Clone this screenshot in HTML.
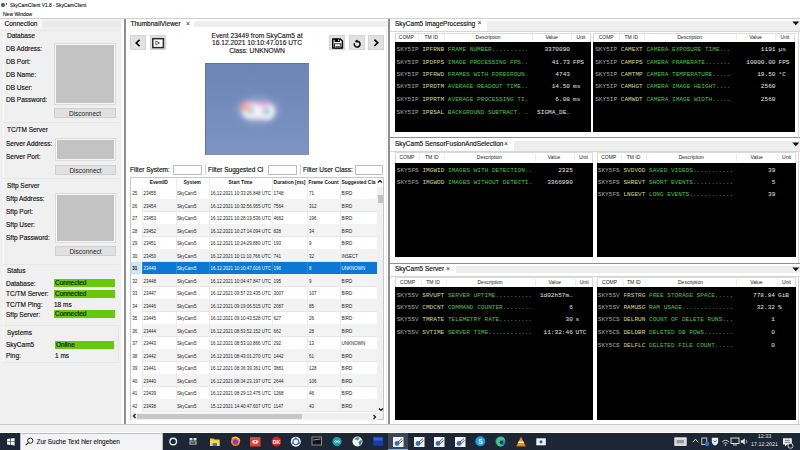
<!DOCTYPE html><html><head><meta charset="utf-8"><style>
*{margin:0;padding:0;box-sizing:border-box}
html,body{width:800px;height:450px;overflow:hidden;background:#fff;font-family:"Liberation Sans",sans-serif;color:#1e1e1e}
.a{position:absolute;white-space:nowrap}
.ui{font-size:6.5px;line-height:8px;color:#111;-webkit-text-stroke:0.15px #111}
.tb{background:#c4c4c4;border:1px solid #e2e2e2}
.btn{background:#e1e1e1;border:1px solid #cfcfcf;text-align:center;font-size:6.5px;line-height:8px}
.grn{background:#66c90c;font-size:6.5px;line-height:8px;padding-left:1px;color:#0b1f00;-webkit-text-stroke:0.2px #0b1f00}
.mono{font-family:"Liberation Mono",monospace;font-size:6.1px;line-height:7px;font-weight:normal}
.blk{background:#000}
.hdr{background:#fff;border:1px solid #d8d8d8;font-size:5px;line-height:8px;color:#222}
.tr{font-size:4.5px;line-height:12px;color:#111}
.th{font-size:4.9px;line-height:10px;font-weight:bold;color:#111}
</style></head><body>
<div class="a" style="left:1.3px;top:3.3px;width:3.8px;height:3.8px;background:#3a5f95;border-radius:2px;box-shadow:0 0 1px #9ec0ea"></div>
<div class="a" style="left:5.6px;top:2.8px;width:1.4px;height:2px;background:#6a4c70;"></div>
<div class="a " style="left:10px;top:1.5px;font-size:4.8px;line-height:8px;color:#111;-webkit-text-stroke:0.1px #111">SkyCamClient V1.8 - SkyCamClient</div>
<div class="a " style="left:3px;top:10.7px;font-size:5px;line-height:7px;color:#111;-webkit-text-stroke:0.1px #111">New Window</div>
<div class="a" style="left:0px;top:18px;width:800px;height:1px;background:#cfcfcf;"></div>
<div class="a" style="left:0px;top:19px;width:123px;height:406px;background:#f0f0f0;"></div>
<div class="a" style="left:0px;top:19px;width:42px;height:10px;background:#f8f8f8;"></div>
<div class="a" style="left:42px;top:20.5px;width:80px;height:6px;background:#eaeaea;"></div>
<div class="a ui" style="left:4.5px;top:19.5px;">Connection</div>
<div class="a" style="left:3px;top:30px;width:116px;height:1px;background:#e6e6e6;"></div>
<div class="a" style="left:3px;top:31px;width:1px;height:91px;background:#f8f8f8;"></div>
<div class="a ui" style="left:7px;top:31.5px;">Database</div>
<div class="a ui" style="left:6px;top:45px;">DB Address:</div>
<div class="a ui" style="left:6px;top:57.5px;">DB Port:</div>
<div class="a ui" style="left:6px;top:71px;">DB Name:</div>
<div class="a ui" style="left:6px;top:83.5px;">DB User:</div>
<div class="a ui" style="left:6px;top:96px;">DB Password:</div>
<div class="a" style="left:53.5px;top:42.5px;width:62px;height:62px;background:#c3c3c3;border:1px solid #dcdcdc;box-shadow:inset 0 0 0 1px #f6f6f6"></div>
<div class="a" style="left:54.5px;top:55.5px;width:1.2px;height:2px;background:#f6f6f6;"></div>
<div class="a" style="left:113.8px;top:55.5px;width:1.2px;height:2px;background:#f6f6f6;"></div>
<div class="a" style="left:54.5px;top:68.5px;width:1.2px;height:2px;background:#f6f6f6;"></div>
<div class="a" style="left:113.8px;top:68.5px;width:1.2px;height:2px;background:#f6f6f6;"></div>
<div class="a" style="left:54.5px;top:81px;width:1.2px;height:2px;background:#f6f6f6;"></div>
<div class="a" style="left:113.8px;top:81px;width:1.2px;height:2px;background:#f6f6f6;"></div>
<div class="a" style="left:54.5px;top:93.5px;width:1.2px;height:2px;background:#f6f6f6;"></div>
<div class="a" style="left:113.8px;top:93.5px;width:1.2px;height:2px;background:#f6f6f6;"></div>
<div class="a btn" style="left:54px;top:108px;width:62px;height:10px;line-height:9px">Disconnect</div>
<div class="a" style="left:3px;top:122px;width:116px;height:1px;background:#e6e6e6;"></div>
<div class="a" style="left:3px;top:123px;width:1px;height:55px;background:#f8f8f8;"></div>
<div class="a ui" style="left:7px;top:126px;">TC/TM Server</div>
<div class="a ui" style="left:6px;top:139.5px;">Server Address:</div>
<div class="a ui" style="left:6px;top:152.5px;">Server Port:</div>
<div class="a" style="left:54.5px;top:137.5px;width:61.5px;height:23.5px;background:#c3c3c3;border:1px solid #dcdcdc;box-shadow:inset 0 0 0 1px #f6f6f6"></div>
<div class="a" style="left:55.5px;top:149px;width:1.2px;height:2px;background:#f6f6f6;"></div>
<div class="a" style="left:114.3px;top:149px;width:1.2px;height:2px;background:#f6f6f6;"></div>
<div class="a btn" style="left:55px;top:164.5px;width:61px;height:10px;line-height:9px">Disconnect</div>
<div class="a" style="left:3px;top:178px;width:116px;height:1px;background:#e6e6e6;"></div>
<div class="a" style="left:3px;top:179px;width:1px;height:85px;background:#f8f8f8;"></div>
<div class="a ui" style="left:7px;top:182px;">Sftp Server</div>
<div class="a ui" style="left:6px;top:195px;">Sftp Address:</div>
<div class="a ui" style="left:6px;top:208px;">Sftp Port:</div>
<div class="a ui" style="left:6px;top:221px;">Sftp User:</div>
<div class="a ui" style="left:6px;top:234px;">Sftp Password:</div>
<div class="a" style="left:54.5px;top:192.5px;width:61px;height:50.5px;background:#c3c3c3;border:1px solid #dcdcdc;box-shadow:inset 0 0 0 1px #f6f6f6"></div>
<div class="a" style="left:55.5px;top:204.5px;width:1.2px;height:2px;background:#f6f6f6;"></div>
<div class="a" style="left:113.8px;top:204.5px;width:1.2px;height:2px;background:#f6f6f6;"></div>
<div class="a" style="left:55.5px;top:217px;width:1.2px;height:2px;background:#f6f6f6;"></div>
<div class="a" style="left:113.8px;top:217px;width:1.2px;height:2px;background:#f6f6f6;"></div>
<div class="a" style="left:55.5px;top:229.5px;width:1.2px;height:2px;background:#f6f6f6;"></div>
<div class="a" style="left:113.8px;top:229.5px;width:1.2px;height:2px;background:#f6f6f6;"></div>
<div class="a btn" style="left:55px;top:246px;width:61px;height:10px;line-height:9px">Disconnect</div>
<div class="a" style="left:3px;top:264px;width:116px;height:1px;background:#e6e6e6;"></div>
<div class="a" style="left:3px;top:265px;width:1px;height:60px;background:#f8f8f8;"></div>
<div class="a ui" style="left:7px;top:267px;">Status</div>
<div class="a ui" style="left:6px;top:279.5px;">Database:</div>
<div class="a ui" style="left:6px;top:289.5px;">TC/TM Server:</div>
<div class="a ui" style="left:6px;top:300.5px;">TC/TM Ping:</div>
<div class="a ui" style="left:6px;top:310.8px;">Sftp Server:</div>
<div class="a grn" style="left:54px;top:279.2px;width:61px;height:8px">Connected</div>
<div class="a grn" style="left:54px;top:289.6px;width:61px;height:8px">Connected</div>
<div class="a grn" style="left:54px;top:310.4px;width:61px;height:8px">Connected</div>
<div class="a ui" style="left:54px;top:300.5px;">18 ms</div>
<div class="a" style="left:3px;top:325px;width:116px;height:1px;background:#e6e6e6;"></div>
<div class="a" style="left:3px;top:326px;width:1px;height:37px;background:#f8f8f8;"></div>
<div class="a ui" style="left:7px;top:329px;">Systems</div>
<div class="a" style="left:3px;top:362px;width:116px;height:1px;background:#e6e6e6;"></div>
<div class="a" style="left:118px;top:326px;width:1px;height:36px;background:#e6e6e6;"></div>
<div class="a ui" style="left:6px;top:340.5px;">SkyCam5</div>
<div class="a ui" style="left:6px;top:351.5px;">Ping:</div>
<div class="a grn" style="left:55px;top:340.7px;width:59px;height:8px">Online</div>
<div class="a ui" style="left:55px;top:351.5px;">1 ms</div>
<div class="a" style="left:194px;top:20.5px;width:194px;height:6px;background:#eeeeee;"></div>
<div class="a ui" style="left:130.5px;top:20.2px;">ThumbnailViewer</div>
<div class="a " style="left:186px;top:20.2px;font-size:7px;line-height:8px">&#215;</div>
<div class="a" style="left:130.3px;top:34.8px;width:15.7px;height:15.7px;background:#e1e1e1;border:1px solid #d4d4d4"><svg width="14" height="14" style="position:absolute;left:0;top:0"><path d="M8.6 3.9 L5.2 7 L8.6 10.2" stroke="#000" stroke-width="1.6" fill="none"/></svg></div>
<div class="a" style="left:149.5px;top:34.8px;width:16px;height:15.7px;background:#e1e1e1;border:1px solid #d4d4d4"><svg width="14" height="14" style="position:absolute;left:0;top:0"><rect x="1.8" y="2.7" width="10.6" height="8.9" stroke="#2a2a2a" stroke-width="1.5" fill="#fff"/><path d="M4.9 5 L8.6 7 L4.9 9 Z" fill="none" stroke="#555" stroke-width="0.9"/></svg></div>
<div class="a" style="left:329.4px;top:34.8px;width:15.4px;height:15.7px;background:#e1e1e1;border:1px solid #d4d4d4"><svg width="14" height="14" style="position:absolute;left:0;top:0"><path d="M2.8 2.9 L10.3 2.9 L12.4 5 L12.4 12 L2.8 12 Z" stroke="#000" stroke-width="1.5" fill="#fff"/><rect x="4.6" y="2.9" width="5.4" height="3.1" fill="#000"/><rect x="8.2" y="3.5" width="1" height="1.8" fill="#fff"/><rect x="4.6" y="7.8" width="6.2" height="4.2" fill="#fff" stroke="#000" stroke-width="0.8"/><rect x="5.5" y="10.3" width="4.4" height="1.2" fill="#111"/></svg></div>
<div class="a" style="left:348.9px;top:34.8px;width:15.7px;height:15.7px;background:#e1e1e1;border:1px solid #d4d4d4"><svg width="14" height="14" style="position:absolute;left:0;top:0"><path d="M6.8 5.2 A2.9 2.9 0 1 1 4.4 7.2" stroke="#000" stroke-width="1.5" fill="none"/><path d="M4.6 5.3 L7.4 3.6 L7.4 6.9 Z" fill="#000"/></svg></div>
<div class="a" style="left:368px;top:34.8px;width:15.8px;height:15.7px;background:#e1e1e1;border:1px solid #d4d4d4"><svg width="14" height="14" style="position:absolute;left:0;top:0"><path d="M5.4 3.6 L8.8 6.8 L5.4 10" stroke="#000" stroke-width="1.6" fill="none"/></svg></div>
<div class="a" style="left:196px;top:32px;width:122px;text-align:center;font-size:6.7px;line-height:7.3px;color:#111;-webkit-text-stroke:0.12px #111">Event 23449 from SkyCam5 at<br>16.12.2021 10:10:47.016 UTC<br>Class: UNKNOWN</div>
<div class="a" style="left:205px;top:63px;width:104px;height:92px;background:linear-gradient(180deg,#6d85b5 0%,#738bbb 45%,#7d94c3 100%);overflow:hidden;box-shadow:inset 1px 1px 0 #5d73a4"><svg width="104" height="92" style="position:absolute;left:0;top:0"><defs><filter id="bl" x="-50%" y="-50%" width="200%" height="200%"><feGaussianBlur stdDeviation="1.9"/></filter><filter id="bl2" x="-50%" y="-50%" width="200%" height="200%"><feGaussianBlur stdDeviation="3.5"/></filter></defs><ellipse cx="53" cy="47.5" rx="21" ry="13" fill="#a9b8da" opacity="0.7" filter="url(#bl2)"/><g filter="url(#bl)"><ellipse cx="53.3" cy="48" rx="15" ry="8.5" fill="#e6e8f2"/><circle cx="45.3" cy="47.5" r="6.3" stroke="#f6f4f8" stroke-width="4.2" fill="#b8d4dc"/><circle cx="61.3" cy="48.5" r="6.3" stroke="#f4f4f8" stroke-width="4.2" fill="#b0cfd8"/><ellipse cx="39.5" cy="44" rx="3.5" ry="4.5" fill="#ff9080" opacity="0.8"/><ellipse cx="46" cy="40.8" rx="6" ry="2.2" fill="#f5a0c0" opacity="0.7"/><ellipse cx="58.5" cy="41.5" rx="7" ry="2.6" fill="#ec90d0" opacity="0.65"/></g></svg></div>
<div class="a ui" style="left:130px;top:165.5px;">Filter System:</div>
<div class="a" style="left:173px;top:164.5px;width:29px;height:10px;background:#fff;border:1px solid #bdbdbd"></div>
<div class="a" style="left:204.5px;top:164px;width:1px;height:11px;background:#d8d8d8;"></div>
<div class="a ui" style="left:208px;top:165.5px;">Filter Suggested Cl</div>
<div class="a" style="left:268px;top:164.5px;width:29px;height:10px;background:#fff;border:1px solid #bdbdbd"></div>
<div class="a" style="left:299.5px;top:164px;width:1px;height:11px;background:#d8d8d8;"></div>
<div class="a ui" style="left:303px;top:165.5px;">Filter User Class:</div>
<div class="a" style="left:354.5px;top:164.5px;width:28px;height:10px;background:#fff;border:1px solid #bdbdbd"></div>
<div class="a" style="left:130px;top:177px;width:254px;height:243px;background:#fff;border:1px solid #c8c8c8"></div>
<div class="a th" style="left:142px;top:177.5px;width:33.5px;text-align:center;overflow:hidden;text-overflow:clip">EventID</div>
<div class="a" style="left:175.5px;top:178px;width:1px;height:10px;background:#ececec;"></div>
<div class="a th" style="left:175.5px;top:177.5px;width:33.5px;text-align:center;overflow:hidden;text-overflow:clip">System</div>
<div class="a" style="left:209px;top:178px;width:1px;height:10px;background:#ececec;"></div>
<div class="a th" style="left:209px;top:177.5px;width:63px;text-align:center;overflow:hidden;text-overflow:clip">Start Time</div>
<div class="a" style="left:272px;top:178px;width:1px;height:10px;background:#ececec;"></div>
<div class="a th" style="left:272px;top:177.5px;width:35px;text-align:center;overflow:hidden;text-overflow:clip">Duration [ms]</div>
<div class="a" style="left:307px;top:178px;width:1px;height:10px;background:#ececec;"></div>
<div class="a th" style="left:307px;top:177.5px;width:33px;text-align:center;overflow:hidden;text-overflow:clip">Frame Count</div>
<div class="a" style="left:340px;top:178px;width:1px;height:10px;background:#ececec;"></div>
<div class="a th" style="left:340px;top:177.5px;width:37px;text-align:center;overflow:hidden;text-overflow:clip">Suggested Cla</div>
<div class="a" style="left:377px;top:178px;width:1px;height:10px;background:#ececec;"></div>
<div class="a" style="left:142px;top:186.9px;width:235px;height:12.5px;background:#fff;"></div>
<div class="a tr" style="left:132.3px;top:188.3px;color:#222;">25</div>
<div class="a tr" style="left:143.5px;top:188.3px;color:#222;">23455</div>
<div class="a tr" style="left:177px;top:188.3px;color:#222;">SkyCam5</div>
<div class="a tr" style="left:210.5px;top:188.3px;color:#222;">16.12.2021 10:33:26.848 UTC</div>
<div class="a tr" style="left:273.5px;top:188.3px;color:#222;">1748</div>
<div class="a tr" style="left:309px;top:188.3px;color:#222;">71</div>
<div class="a tr" style="left:341.5px;top:188.3px;color:#222;">BIRD</div>
<div class="a" style="left:142px;top:186.9px;width:1px;height:12.5px;background:#ececec;"></div>
<div class="a" style="left:175.5px;top:186.9px;width:1px;height:12.5px;background:#ececec;"></div>
<div class="a" style="left:209px;top:186.9px;width:1px;height:12.5px;background:#ececec;"></div>
<div class="a" style="left:272px;top:186.9px;width:1px;height:12.5px;background:#ececec;"></div>
<div class="a" style="left:307px;top:186.9px;width:1px;height:12.5px;background:#ececec;"></div>
<div class="a" style="left:340px;top:186.9px;width:1px;height:12.5px;background:#ececec;"></div>
<div class="a" style="left:142px;top:198.9px;width:235px;height:0.6px;background:#e6e6e6;"></div>
<div class="a" style="left:142px;top:199.4px;width:235px;height:12.5px;background:#f3f3f3;"></div>
<div class="a tr" style="left:132.3px;top:200.8px;color:#222;">26</div>
<div class="a tr" style="left:143.5px;top:200.8px;color:#222;">23454</div>
<div class="a tr" style="left:177px;top:200.8px;color:#222;">SkyCam5</div>
<div class="a tr" style="left:210.5px;top:200.8px;color:#222;">16.12.2021 10:32:56.955 UTC</div>
<div class="a tr" style="left:273.5px;top:200.8px;color:#222;">7564</div>
<div class="a tr" style="left:309px;top:200.8px;color:#222;">312</div>
<div class="a tr" style="left:341.5px;top:200.8px;color:#222;">BIRD</div>
<div class="a" style="left:142px;top:199.4px;width:1px;height:12.5px;background:#ececec;"></div>
<div class="a" style="left:175.5px;top:199.4px;width:1px;height:12.5px;background:#ececec;"></div>
<div class="a" style="left:209px;top:199.4px;width:1px;height:12.5px;background:#ececec;"></div>
<div class="a" style="left:272px;top:199.4px;width:1px;height:12.5px;background:#ececec;"></div>
<div class="a" style="left:307px;top:199.4px;width:1px;height:12.5px;background:#ececec;"></div>
<div class="a" style="left:340px;top:199.4px;width:1px;height:12.5px;background:#ececec;"></div>
<div class="a" style="left:142px;top:211.4px;width:235px;height:0.6px;background:#e6e6e6;"></div>
<div class="a" style="left:142px;top:211.9px;width:235px;height:12.5px;background:#fff;"></div>
<div class="a tr" style="left:132.3px;top:213.3px;color:#222;">27</div>
<div class="a tr" style="left:143.5px;top:213.3px;color:#222;">23453</div>
<div class="a tr" style="left:177px;top:213.3px;color:#222;">SkyCam5</div>
<div class="a tr" style="left:210.5px;top:213.3px;color:#222;">16.12.2021 10:28:19.536 UTC</div>
<div class="a tr" style="left:273.5px;top:213.3px;color:#222;">4662</div>
<div class="a tr" style="left:309px;top:213.3px;color:#222;">196</div>
<div class="a tr" style="left:341.5px;top:213.3px;color:#222;">BIRD</div>
<div class="a" style="left:142px;top:211.9px;width:1px;height:12.5px;background:#ececec;"></div>
<div class="a" style="left:175.5px;top:211.9px;width:1px;height:12.5px;background:#ececec;"></div>
<div class="a" style="left:209px;top:211.9px;width:1px;height:12.5px;background:#ececec;"></div>
<div class="a" style="left:272px;top:211.9px;width:1px;height:12.5px;background:#ececec;"></div>
<div class="a" style="left:307px;top:211.9px;width:1px;height:12.5px;background:#ececec;"></div>
<div class="a" style="left:340px;top:211.9px;width:1px;height:12.5px;background:#ececec;"></div>
<div class="a" style="left:142px;top:223.9px;width:235px;height:0.6px;background:#e6e6e6;"></div>
<div class="a" style="left:142px;top:224.4px;width:235px;height:12.5px;background:#f3f3f3;"></div>
<div class="a tr" style="left:132.3px;top:225.8px;color:#222;">28</div>
<div class="a tr" style="left:143.5px;top:225.8px;color:#222;">23452</div>
<div class="a tr" style="left:177px;top:225.8px;color:#222;">SkyCam5</div>
<div class="a tr" style="left:210.5px;top:225.8px;color:#222;">16.12.2021 10:27:14.094 UTC</div>
<div class="a tr" style="left:273.5px;top:225.8px;color:#222;">828</div>
<div class="a tr" style="left:309px;top:225.8px;color:#222;">34</div>
<div class="a tr" style="left:341.5px;top:225.8px;color:#222;">BIRD</div>
<div class="a" style="left:142px;top:224.4px;width:1px;height:12.5px;background:#ececec;"></div>
<div class="a" style="left:175.5px;top:224.4px;width:1px;height:12.5px;background:#ececec;"></div>
<div class="a" style="left:209px;top:224.4px;width:1px;height:12.5px;background:#ececec;"></div>
<div class="a" style="left:272px;top:224.4px;width:1px;height:12.5px;background:#ececec;"></div>
<div class="a" style="left:307px;top:224.4px;width:1px;height:12.5px;background:#ececec;"></div>
<div class="a" style="left:340px;top:224.4px;width:1px;height:12.5px;background:#ececec;"></div>
<div class="a" style="left:142px;top:236.4px;width:235px;height:0.6px;background:#e6e6e6;"></div>
<div class="a" style="left:142px;top:236.9px;width:235px;height:12.5px;background:#fff;"></div>
<div class="a tr" style="left:132.3px;top:238.3px;color:#222;">29</div>
<div class="a tr" style="left:143.5px;top:238.3px;color:#222;">23451</div>
<div class="a tr" style="left:177px;top:238.3px;color:#222;">SkyCam5</div>
<div class="a tr" style="left:210.5px;top:238.3px;color:#222;">16.12.2021 10:24:29.880 UTC</div>
<div class="a tr" style="left:273.5px;top:238.3px;color:#222;">193</div>
<div class="a tr" style="left:309px;top:238.3px;color:#222;">9</div>
<div class="a tr" style="left:341.5px;top:238.3px;color:#222;">BIRD</div>
<div class="a" style="left:142px;top:236.9px;width:1px;height:12.5px;background:#ececec;"></div>
<div class="a" style="left:175.5px;top:236.9px;width:1px;height:12.5px;background:#ececec;"></div>
<div class="a" style="left:209px;top:236.9px;width:1px;height:12.5px;background:#ececec;"></div>
<div class="a" style="left:272px;top:236.9px;width:1px;height:12.5px;background:#ececec;"></div>
<div class="a" style="left:307px;top:236.9px;width:1px;height:12.5px;background:#ececec;"></div>
<div class="a" style="left:340px;top:236.9px;width:1px;height:12.5px;background:#ececec;"></div>
<div class="a" style="left:142px;top:248.9px;width:235px;height:0.6px;background:#e6e6e6;"></div>
<div class="a" style="left:142px;top:249.4px;width:235px;height:12.5px;background:#f3f3f3;"></div>
<div class="a tr" style="left:132.3px;top:250.8px;color:#222;">30</div>
<div class="a tr" style="left:143.5px;top:250.8px;color:#222;">23450</div>
<div class="a tr" style="left:177px;top:250.8px;color:#222;">SkyCam5</div>
<div class="a tr" style="left:210.5px;top:250.8px;color:#222;">16.12.2021 10:11:10.766 UTC</div>
<div class="a tr" style="left:273.5px;top:250.8px;color:#222;">741</div>
<div class="a tr" style="left:309px;top:250.8px;color:#222;">32</div>
<div class="a tr" style="left:341.5px;top:250.8px;color:#222;">INSECT</div>
<div class="a" style="left:142px;top:249.4px;width:1px;height:12.5px;background:#ececec;"></div>
<div class="a" style="left:175.5px;top:249.4px;width:1px;height:12.5px;background:#ececec;"></div>
<div class="a" style="left:209px;top:249.4px;width:1px;height:12.5px;background:#ececec;"></div>
<div class="a" style="left:272px;top:249.4px;width:1px;height:12.5px;background:#ececec;"></div>
<div class="a" style="left:307px;top:249.4px;width:1px;height:12.5px;background:#ececec;"></div>
<div class="a" style="left:340px;top:249.4px;width:1px;height:12.5px;background:#ececec;"></div>
<div class="a" style="left:142px;top:261.4px;width:235px;height:0.6px;background:#e6e6e6;"></div>
<div class="a" style="left:142px;top:261.9px;width:235px;height:12.5px;background:#fff;"></div>
<div class="a" style="left:142.5px;top:262.4px;width:234.5px;height:11.6px;background:#0a78d4;"></div>
<div class="a" style="left:131px;top:262.4px;width:9.5px;height:11.6px;background:#cde6f7;"></div>
<div class="a tr" style="left:132.3px;top:263.29999999999995px;color:#000;font-weight:bold;">31</div>
<div class="a tr" style="left:143.5px;top:263.29999999999995px;color:#fff;">23449</div>
<div class="a tr" style="left:177px;top:263.29999999999995px;color:#fff;">SkyCam5</div>
<div class="a tr" style="left:210.5px;top:263.29999999999995px;color:#fff;">16.12.2021 10:10:47.016 UTC</div>
<div class="a tr" style="left:273.5px;top:263.29999999999995px;color:#fff;">196</div>
<div class="a tr" style="left:309px;top:263.29999999999995px;color:#fff;">8</div>
<div class="a tr" style="left:341.5px;top:263.29999999999995px;color:#fff;">UNKNOWN</div>
<div class="a" style="left:142px;top:262.4px;width:1px;height:11.6px;background:#2a88d8;"></div>
<div class="a" style="left:175.5px;top:262.4px;width:1px;height:11.6px;background:#2a88d8;"></div>
<div class="a" style="left:209px;top:262.4px;width:1px;height:11.6px;background:#2a88d8;"></div>
<div class="a" style="left:272px;top:262.4px;width:1px;height:11.6px;background:#2a88d8;"></div>
<div class="a" style="left:307px;top:262.4px;width:1px;height:11.6px;background:#2a88d8;"></div>
<div class="a" style="left:340px;top:262.4px;width:1px;height:11.6px;background:#2a88d8;"></div>
<div class="a" style="left:142px;top:274.4px;width:235px;height:12.5px;background:#f3f3f3;"></div>
<div class="a tr" style="left:132.3px;top:275.79999999999995px;color:#222;">32</div>
<div class="a tr" style="left:143.5px;top:275.79999999999995px;color:#222;">23448</div>
<div class="a tr" style="left:177px;top:275.79999999999995px;color:#222;">SkyCam5</div>
<div class="a tr" style="left:210.5px;top:275.79999999999995px;color:#222;">16.12.2021 10:04:47.847 UTC</div>
<div class="a tr" style="left:273.5px;top:275.79999999999995px;color:#222;">195</div>
<div class="a tr" style="left:309px;top:275.79999999999995px;color:#222;">9</div>
<div class="a tr" style="left:341.5px;top:275.79999999999995px;color:#222;">BIRD</div>
<div class="a" style="left:142px;top:274.4px;width:1px;height:12.5px;background:#ececec;"></div>
<div class="a" style="left:175.5px;top:274.4px;width:1px;height:12.5px;background:#ececec;"></div>
<div class="a" style="left:209px;top:274.4px;width:1px;height:12.5px;background:#ececec;"></div>
<div class="a" style="left:272px;top:274.4px;width:1px;height:12.5px;background:#ececec;"></div>
<div class="a" style="left:307px;top:274.4px;width:1px;height:12.5px;background:#ececec;"></div>
<div class="a" style="left:340px;top:274.4px;width:1px;height:12.5px;background:#ececec;"></div>
<div class="a" style="left:142px;top:286.4px;width:235px;height:0.6px;background:#e6e6e6;"></div>
<div class="a" style="left:142px;top:286.9px;width:235px;height:12.5px;background:#fff;"></div>
<div class="a tr" style="left:132.3px;top:288.29999999999995px;color:#222;">33</div>
<div class="a tr" style="left:143.5px;top:288.29999999999995px;color:#222;">23447</div>
<div class="a tr" style="left:177px;top:288.29999999999995px;color:#222;">SkyCam5</div>
<div class="a tr" style="left:210.5px;top:288.29999999999995px;color:#222;">16.12.2021 09:57:23.435 UTC</div>
<div class="a tr" style="left:273.5px;top:288.29999999999995px;color:#222;">3007</div>
<div class="a tr" style="left:309px;top:288.29999999999995px;color:#222;">107</div>
<div class="a tr" style="left:341.5px;top:288.29999999999995px;color:#222;">BIRD</div>
<div class="a" style="left:142px;top:286.9px;width:1px;height:12.5px;background:#ececec;"></div>
<div class="a" style="left:175.5px;top:286.9px;width:1px;height:12.5px;background:#ececec;"></div>
<div class="a" style="left:209px;top:286.9px;width:1px;height:12.5px;background:#ececec;"></div>
<div class="a" style="left:272px;top:286.9px;width:1px;height:12.5px;background:#ececec;"></div>
<div class="a" style="left:307px;top:286.9px;width:1px;height:12.5px;background:#ececec;"></div>
<div class="a" style="left:340px;top:286.9px;width:1px;height:12.5px;background:#ececec;"></div>
<div class="a" style="left:142px;top:298.9px;width:235px;height:0.6px;background:#e6e6e6;"></div>
<div class="a" style="left:142px;top:299.4px;width:235px;height:12.5px;background:#f3f3f3;"></div>
<div class="a tr" style="left:132.3px;top:300.79999999999995px;color:#222;">34</div>
<div class="a tr" style="left:143.5px;top:300.79999999999995px;color:#222;">23446</div>
<div class="a tr" style="left:177px;top:300.79999999999995px;color:#222;">SkyCam5</div>
<div class="a tr" style="left:210.5px;top:300.79999999999995px;color:#222;">16.12.2021 09:19:06.515 UTC</div>
<div class="a tr" style="left:273.5px;top:300.79999999999995px;color:#222;">2087</div>
<div class="a tr" style="left:309px;top:300.79999999999995px;color:#222;">85</div>
<div class="a tr" style="left:341.5px;top:300.79999999999995px;color:#222;">BIRD</div>
<div class="a" style="left:142px;top:299.4px;width:1px;height:12.5px;background:#ececec;"></div>
<div class="a" style="left:175.5px;top:299.4px;width:1px;height:12.5px;background:#ececec;"></div>
<div class="a" style="left:209px;top:299.4px;width:1px;height:12.5px;background:#ececec;"></div>
<div class="a" style="left:272px;top:299.4px;width:1px;height:12.5px;background:#ececec;"></div>
<div class="a" style="left:307px;top:299.4px;width:1px;height:12.5px;background:#ececec;"></div>
<div class="a" style="left:340px;top:299.4px;width:1px;height:12.5px;background:#ececec;"></div>
<div class="a" style="left:142px;top:311.4px;width:235px;height:0.6px;background:#e6e6e6;"></div>
<div class="a" style="left:142px;top:311.9px;width:235px;height:12.5px;background:#fff;"></div>
<div class="a tr" style="left:132.3px;top:313.29999999999995px;color:#222;">35</div>
<div class="a tr" style="left:143.5px;top:313.29999999999995px;color:#222;">23445</div>
<div class="a tr" style="left:177px;top:313.29999999999995px;color:#222;">SkyCam5</div>
<div class="a tr" style="left:210.5px;top:313.29999999999995px;color:#222;">16.12.2021 09:10:43.528 UTC</div>
<div class="a tr" style="left:273.5px;top:313.29999999999995px;color:#222;">627</div>
<div class="a tr" style="left:309px;top:313.29999999999995px;color:#222;">26</div>
<div class="a tr" style="left:341.5px;top:313.29999999999995px;color:#222;">BIRD</div>
<div class="a" style="left:142px;top:311.9px;width:1px;height:12.5px;background:#ececec;"></div>
<div class="a" style="left:175.5px;top:311.9px;width:1px;height:12.5px;background:#ececec;"></div>
<div class="a" style="left:209px;top:311.9px;width:1px;height:12.5px;background:#ececec;"></div>
<div class="a" style="left:272px;top:311.9px;width:1px;height:12.5px;background:#ececec;"></div>
<div class="a" style="left:307px;top:311.9px;width:1px;height:12.5px;background:#ececec;"></div>
<div class="a" style="left:340px;top:311.9px;width:1px;height:12.5px;background:#ececec;"></div>
<div class="a" style="left:142px;top:323.9px;width:235px;height:0.6px;background:#e6e6e6;"></div>
<div class="a" style="left:142px;top:324.4px;width:235px;height:12.5px;background:#f3f3f3;"></div>
<div class="a tr" style="left:132.3px;top:325.79999999999995px;color:#222;">36</div>
<div class="a tr" style="left:143.5px;top:325.79999999999995px;color:#222;">23444</div>
<div class="a tr" style="left:177px;top:325.79999999999995px;color:#222;">SkyCam5</div>
<div class="a tr" style="left:210.5px;top:325.79999999999995px;color:#222;">16.12.2021 08:53:52.152 UTC</div>
<div class="a tr" style="left:273.5px;top:325.79999999999995px;color:#222;">662</div>
<div class="a tr" style="left:309px;top:325.79999999999995px;color:#222;">28</div>
<div class="a tr" style="left:341.5px;top:325.79999999999995px;color:#222;">BIRD</div>
<div class="a" style="left:142px;top:324.4px;width:1px;height:12.5px;background:#ececec;"></div>
<div class="a" style="left:175.5px;top:324.4px;width:1px;height:12.5px;background:#ececec;"></div>
<div class="a" style="left:209px;top:324.4px;width:1px;height:12.5px;background:#ececec;"></div>
<div class="a" style="left:272px;top:324.4px;width:1px;height:12.5px;background:#ececec;"></div>
<div class="a" style="left:307px;top:324.4px;width:1px;height:12.5px;background:#ececec;"></div>
<div class="a" style="left:340px;top:324.4px;width:1px;height:12.5px;background:#ececec;"></div>
<div class="a" style="left:142px;top:336.4px;width:235px;height:0.6px;background:#e6e6e6;"></div>
<div class="a" style="left:142px;top:336.9px;width:235px;height:12.5px;background:#fff;"></div>
<div class="a tr" style="left:132.3px;top:338.29999999999995px;color:#222;">37</div>
<div class="a tr" style="left:143.5px;top:338.29999999999995px;color:#222;">23443</div>
<div class="a tr" style="left:177px;top:338.29999999999995px;color:#222;">SkyCam5</div>
<div class="a tr" style="left:210.5px;top:338.29999999999995px;color:#222;">16.12.2021 08:53:10.866 UTC</div>
<div class="a tr" style="left:273.5px;top:338.29999999999995px;color:#222;">292</div>
<div class="a tr" style="left:309px;top:338.29999999999995px;color:#222;">13</div>
<div class="a tr" style="left:341.5px;top:338.29999999999995px;color:#222;">UNKNOWN</div>
<div class="a" style="left:142px;top:336.9px;width:1px;height:12.5px;background:#ececec;"></div>
<div class="a" style="left:175.5px;top:336.9px;width:1px;height:12.5px;background:#ececec;"></div>
<div class="a" style="left:209px;top:336.9px;width:1px;height:12.5px;background:#ececec;"></div>
<div class="a" style="left:272px;top:336.9px;width:1px;height:12.5px;background:#ececec;"></div>
<div class="a" style="left:307px;top:336.9px;width:1px;height:12.5px;background:#ececec;"></div>
<div class="a" style="left:340px;top:336.9px;width:1px;height:12.5px;background:#ececec;"></div>
<div class="a" style="left:142px;top:348.9px;width:235px;height:0.6px;background:#e6e6e6;"></div>
<div class="a" style="left:142px;top:349.4px;width:235px;height:12.5px;background:#f3f3f3;"></div>
<div class="a tr" style="left:132.3px;top:350.79999999999995px;color:#222;">38</div>
<div class="a tr" style="left:143.5px;top:350.79999999999995px;color:#222;">23442</div>
<div class="a tr" style="left:177px;top:350.79999999999995px;color:#222;">SkyCam5</div>
<div class="a tr" style="left:210.5px;top:350.79999999999995px;color:#222;">16.12.2021 08:43:01.270 UTC</div>
<div class="a tr" style="left:273.5px;top:350.79999999999995px;color:#222;">1442</div>
<div class="a tr" style="left:309px;top:350.79999999999995px;color:#222;">61</div>
<div class="a tr" style="left:341.5px;top:350.79999999999995px;color:#222;">BIRD</div>
<div class="a" style="left:142px;top:349.4px;width:1px;height:12.5px;background:#ececec;"></div>
<div class="a" style="left:175.5px;top:349.4px;width:1px;height:12.5px;background:#ececec;"></div>
<div class="a" style="left:209px;top:349.4px;width:1px;height:12.5px;background:#ececec;"></div>
<div class="a" style="left:272px;top:349.4px;width:1px;height:12.5px;background:#ececec;"></div>
<div class="a" style="left:307px;top:349.4px;width:1px;height:12.5px;background:#ececec;"></div>
<div class="a" style="left:340px;top:349.4px;width:1px;height:12.5px;background:#ececec;"></div>
<div class="a" style="left:142px;top:361.4px;width:235px;height:0.6px;background:#e6e6e6;"></div>
<div class="a" style="left:142px;top:361.9px;width:235px;height:12.5px;background:#fff;"></div>
<div class="a tr" style="left:132.3px;top:363.29999999999995px;color:#222;">39</div>
<div class="a tr" style="left:143.5px;top:363.29999999999995px;color:#222;">23441</div>
<div class="a tr" style="left:177px;top:363.29999999999995px;color:#222;">SkyCam5</div>
<div class="a tr" style="left:210.5px;top:363.29999999999995px;color:#222;">16.12.2021 08:36:39.361 UTC</div>
<div class="a tr" style="left:273.5px;top:363.29999999999995px;color:#222;">3881</div>
<div class="a tr" style="left:309px;top:363.29999999999995px;color:#222;">128</div>
<div class="a tr" style="left:341.5px;top:363.29999999999995px;color:#222;">BIRD</div>
<div class="a" style="left:142px;top:361.9px;width:1px;height:12.5px;background:#ececec;"></div>
<div class="a" style="left:175.5px;top:361.9px;width:1px;height:12.5px;background:#ececec;"></div>
<div class="a" style="left:209px;top:361.9px;width:1px;height:12.5px;background:#ececec;"></div>
<div class="a" style="left:272px;top:361.9px;width:1px;height:12.5px;background:#ececec;"></div>
<div class="a" style="left:307px;top:361.9px;width:1px;height:12.5px;background:#ececec;"></div>
<div class="a" style="left:340px;top:361.9px;width:1px;height:12.5px;background:#ececec;"></div>
<div class="a" style="left:142px;top:373.9px;width:235px;height:0.6px;background:#e6e6e6;"></div>
<div class="a" style="left:142px;top:374.4px;width:235px;height:12.5px;background:#f3f3f3;"></div>
<div class="a tr" style="left:132.3px;top:375.79999999999995px;color:#222;">40</div>
<div class="a tr" style="left:143.5px;top:375.79999999999995px;color:#222;">23440</div>
<div class="a tr" style="left:177px;top:375.79999999999995px;color:#222;">SkyCam5</div>
<div class="a tr" style="left:210.5px;top:375.79999999999995px;color:#222;">16.12.2021 08:34:23.197 UTC</div>
<div class="a tr" style="left:273.5px;top:375.79999999999995px;color:#222;">2644</div>
<div class="a tr" style="left:309px;top:375.79999999999995px;color:#222;">106</div>
<div class="a tr" style="left:341.5px;top:375.79999999999995px;color:#222;">BIRD</div>
<div class="a" style="left:142px;top:374.4px;width:1px;height:12.5px;background:#ececec;"></div>
<div class="a" style="left:175.5px;top:374.4px;width:1px;height:12.5px;background:#ececec;"></div>
<div class="a" style="left:209px;top:374.4px;width:1px;height:12.5px;background:#ececec;"></div>
<div class="a" style="left:272px;top:374.4px;width:1px;height:12.5px;background:#ececec;"></div>
<div class="a" style="left:307px;top:374.4px;width:1px;height:12.5px;background:#ececec;"></div>
<div class="a" style="left:340px;top:374.4px;width:1px;height:12.5px;background:#ececec;"></div>
<div class="a" style="left:142px;top:386.4px;width:235px;height:0.6px;background:#e6e6e6;"></div>
<div class="a" style="left:142px;top:386.9px;width:235px;height:12.5px;background:#fff;"></div>
<div class="a tr" style="left:132.3px;top:388.29999999999995px;color:#222;">41</div>
<div class="a tr" style="left:143.5px;top:388.29999999999995px;color:#222;">23439</div>
<div class="a tr" style="left:177px;top:388.29999999999995px;color:#222;">SkyCam5</div>
<div class="a tr" style="left:210.5px;top:388.29999999999995px;color:#222;">16.12.2021 08:29:13.475 UTC</div>
<div class="a tr" style="left:273.5px;top:388.29999999999995px;color:#222;">1268</div>
<div class="a tr" style="left:309px;top:388.29999999999995px;color:#222;">46</div>
<div class="a tr" style="left:341.5px;top:388.29999999999995px;color:#222;">BIRD</div>
<div class="a" style="left:142px;top:386.9px;width:1px;height:12.5px;background:#ececec;"></div>
<div class="a" style="left:175.5px;top:386.9px;width:1px;height:12.5px;background:#ececec;"></div>
<div class="a" style="left:209px;top:386.9px;width:1px;height:12.5px;background:#ececec;"></div>
<div class="a" style="left:272px;top:386.9px;width:1px;height:12.5px;background:#ececec;"></div>
<div class="a" style="left:307px;top:386.9px;width:1px;height:12.5px;background:#ececec;"></div>
<div class="a" style="left:340px;top:386.9px;width:1px;height:12.5px;background:#ececec;"></div>
<div class="a" style="left:142px;top:398.9px;width:235px;height:0.6px;background:#e6e6e6;"></div>
<div class="a" style="left:142px;top:399.4px;width:235px;height:12.5px;background:#f3f3f3;"></div>
<div class="a tr" style="left:132.3px;top:400.79999999999995px;color:#222;">42</div>
<div class="a tr" style="left:143.5px;top:400.79999999999995px;color:#222;">23438</div>
<div class="a tr" style="left:177px;top:400.79999999999995px;color:#222;">SkyCam5</div>
<div class="a tr" style="left:210.5px;top:400.79999999999995px;color:#222;">15.12.2021 14:40:47.607 UTC</div>
<div class="a tr" style="left:273.5px;top:400.79999999999995px;color:#222;">1147</div>
<div class="a tr" style="left:309px;top:400.79999999999995px;color:#222;">40</div>
<div class="a tr" style="left:341.5px;top:400.79999999999995px;color:#222;">BIRD</div>
<div class="a" style="left:142px;top:399.4px;width:1px;height:12.5px;background:#ececec;"></div>
<div class="a" style="left:175.5px;top:399.4px;width:1px;height:12.5px;background:#ececec;"></div>
<div class="a" style="left:209px;top:399.4px;width:1px;height:12.5px;background:#ececec;"></div>
<div class="a" style="left:272px;top:399.4px;width:1px;height:12.5px;background:#ececec;"></div>
<div class="a" style="left:307px;top:399.4px;width:1px;height:12.5px;background:#ececec;"></div>
<div class="a" style="left:340px;top:399.4px;width:1px;height:12.5px;background:#ececec;"></div>
<div class="a" style="left:142px;top:411.4px;width:235px;height:0.6px;background:#e6e6e6;"></div>
<div class="a" style="left:377px;top:187px;width:6px;height:232px;background:#f0f0f0;"></div>
<div class="a" style="left:378px;top:195px;width:5px;height:8px;background:#c1c1c1;"></div>
<svg class="a" style="left:377px;top:179px" width="6" height="5"><path d="M1 3.5 L3 1.5 L5 3.5" stroke="#111" stroke-width="1.2" fill="none"/></svg>
<svg class="a" style="left:377.5px;top:407px" width="6" height="5"><path d="M1 1.5 L3 3.5 L5 1.5" stroke="#111" stroke-width="1.2" fill="none"/></svg>
<div class="a" style="left:131px;top:412.5px;width:246px;height:7px;background:#f0f0f0;"></div>
<div class="a" style="left:137px;top:413.5px;width:165px;height:5px;background:#c8c8c8;"></div>
<svg class="a" style="left:131.5px;top:413px" width="5" height="6"><path d="M3.5 1 L1.5 3 L3.5 5" stroke="#111" stroke-width="1.2" fill="none"/></svg>
<svg class="a" style="left:371.5px;top:413.5px" width="5" height="6"><path d="M1.5 1 L3.5 3 L1.5 5" stroke="#111" stroke-width="1.2" fill="none"/></svg>
<div class="a" style="left:385.5px;top:28px;width:1px;height:397px;background:#efefef;"></div>
<div class="a" style="left:390px;top:20.5px;width:410px;height:10.5px;background:#eeeeee;"></div>
<div class="a" style="left:390px;top:20.5px;width:97px;height:10.5px;background:#fff;"></div>
<div class="a ui" style="left:395px;top:19.5px;">SkyCam5 ImageProcessing</div>
<div class="a " style="left:477.5px;top:19.3px;font-size:7px;line-height:8px">&#215;</div>
<svg class="a" style="left:792px;top:20.8px" width="8" height="6"><path d="M0.3 0.5 L7.3 0.5 L3.8 4.3 Z" fill="#111"/></svg>
<div class="a" style="left:390px;top:31.3px;width:410px;height:1px;background:#d6d6d6;"></div>
<div class="a" style="left:394.5px;top:32.5px;width:196.0px;height:9.299999999999997px;background:#fff;border:1px solid #dadada;border-bottom:none"></div>
<div class="a" style="left:418.2px;top:34.0px;width:1px;height:6.299999999999997px;background:#ececec;"></div>
<div class="a" style="left:444.3px;top:34.0px;width:1px;height:6.299999999999997px;background:#ececec;"></div>
<div class="a" style="left:531.9px;top:34.0px;width:1px;height:6.299999999999997px;background:#ececec;"></div>
<div class="a" style="left:571.3px;top:34.0px;width:1px;height:6.299999999999997px;background:#ececec;"></div>
<div class="a" style="left:394.5px;top:32.5px;width:23.69999999999999px;text-align:center;font-size:5px;line-height:9.299999999999997px;color:#222">COMP</div>
<div class="a" style="left:418.2px;top:32.5px;width:26.100000000000023px;text-align:center;font-size:5px;line-height:9.299999999999997px;color:#222">TM ID</div>
<div class="a" style="left:444.3px;top:32.5px;width:87.59999999999997px;text-align:center;font-size:5px;line-height:9.299999999999997px;color:#222">Description</div>
<div class="a" style="left:531.9px;top:32.5px;width:39.39999999999998px;text-align:center;font-size:5px;line-height:9.299999999999997px;color:#222">Value</div>
<div class="a" style="left:571.3px;top:32.5px;width:19.200000000000045px;text-align:center;font-size:5px;line-height:9.299999999999997px;color:#222">Unit</div>
<div class="a" style="left:394.5px;top:41.8px;width:196px;height:90.2px;background:#000;"></div>
<div class="a" style="left:593.3px;top:32.5px;width:201.70000000000005px;height:9.299999999999997px;background:#fff;border:1px solid #dadada;border-bottom:none"></div>
<div class="a" style="left:619px;top:34.0px;width:1px;height:6.299999999999997px;background:#ececec;"></div>
<div class="a" style="left:643.5px;top:34.0px;width:1px;height:6.299999999999997px;background:#ececec;"></div>
<div class="a" style="left:736px;top:34.0px;width:1px;height:6.299999999999997px;background:#ececec;"></div>
<div class="a" style="left:775px;top:34.0px;width:1px;height:6.299999999999997px;background:#ececec;"></div>
<div class="a" style="left:593.3px;top:32.5px;width:25.700000000000045px;text-align:center;font-size:5px;line-height:9.299999999999997px;color:#222">COMP</div>
<div class="a" style="left:619px;top:32.5px;width:24.5px;text-align:center;font-size:5px;line-height:9.299999999999997px;color:#222">TM ID</div>
<div class="a" style="left:643.5px;top:32.5px;width:92.5px;text-align:center;font-size:5px;line-height:9.299999999999997px;color:#222">Description</div>
<div class="a" style="left:736px;top:32.5px;width:39px;text-align:center;font-size:5px;line-height:9.299999999999997px;color:#222">Value</div>
<div class="a" style="left:775px;top:32.5px;width:20px;text-align:center;font-size:5px;line-height:9.299999999999997px;color:#222">Unit</div>
<div class="a" style="left:593.3px;top:41.8px;width:201.7px;height:90.2px;background:#000;"></div>
<div class="a mono" style="left:396.6px;top:45.9px"><span style="color:#a9a9a9">SKY5IP </span><span style="color:#d9d98a">IPFRNB </span><span style="color:#4cc24c">FRAME NUMBER..........</span></div>
<div class="a mono" style="left:490px;top:45.9px;width:80px;text-align:right;color:#e6e6e6">3370090</div>
<div class="a mono" style="left:396.6px;top:58.7px"><span style="color:#a9a9a9">SKY5IP </span><span style="color:#d9d98a">IPDFPS </span><span style="color:#4cc24c">IMAGE PROCESSING FPS..</span></div>
<div class="a mono" style="left:490px;top:58.7px;width:80px;text-align:right;color:#e6e6e6">41.73</div>
<div class="a mono" style="left:573px;top:58.7px;color:#e6e6e6">FPS</div>
<div class="a mono" style="left:396.6px;top:70.8px"><span style="color:#a9a9a9">SKY5IP </span><span style="color:#d9d98a">IPFRWD </span><span style="color:#4cc24c">FRAMES WITH FOREGROUN&#8230;</span></div>
<div class="a mono" style="left:490px;top:70.8px;width:80px;text-align:right;color:#e6e6e6">4743</div>
<div class="a mono" style="left:396.6px;top:83.3px"><span style="color:#a9a9a9">SKY5IP </span><span style="color:#d9d98a">IPRDTM </span><span style="color:#4cc24c">AVERAGE READOUT TIME..</span></div>
<div class="a mono" style="left:490px;top:83.3px;width:80px;text-align:right;color:#e6e6e6">14.50</div>
<div class="a mono" style="left:573px;top:83.3px;color:#e6e6e6">ms</div>
<div class="a mono" style="left:396.6px;top:95.7px"><span style="color:#a9a9a9">SKY5IP </span><span style="color:#d9d98a">IPPRTM </span><span style="color:#4cc24c">AVERAGE PROCESSING TI&#8230;</span></div>
<div class="a mono" style="left:490px;top:95.7px;width:80px;text-align:right;color:#e6e6e6">6.08</div>
<div class="a mono" style="left:573px;top:95.7px;color:#e6e6e6">ms</div>
<div class="a mono" style="left:396.6px;top:108.5px"><span style="color:#a9a9a9">SKY5IP </span><span style="color:#d9d98a">IPBSAL </span><span style="color:#4cc24c">BACKGROUND SUBTRACT. &#8230;</span></div>
<div class="a mono" style="left:490px;top:108.5px;width:80px;text-align:right;color:#e6e6e6">SIGMA_DE&#8230;</div>
<div class="a mono" style="left:595.2px;top:45.9px"><span style="color:#a9a9a9">SKY5IP </span><span style="color:#d9d98a">CAMEXT </span><span style="color:#4cc24c">CAMERA EXPOSURE TIME...</span></div>
<div class="a mono" style="left:695.5px;top:45.9px;width:80px;text-align:right;color:#e6e6e6">1191</div>
<div class="a mono" style="left:778.5px;top:45.9px;color:#e6e6e6">&#181;s</div>
<div class="a mono" style="left:595.2px;top:58.7px"><span style="color:#a9a9a9">SKY5IP </span><span style="color:#d9d98a">CAMFPS </span><span style="color:#4cc24c">CAMERA FRAMERATE.......</span></div>
<div class="a mono" style="left:695.5px;top:58.7px;width:80px;text-align:right;color:#e6e6e6">10000.00</div>
<div class="a mono" style="left:778.5px;top:58.7px;color:#e6e6e6">FPS</div>
<div class="a mono" style="left:595.2px;top:70.8px"><span style="color:#a9a9a9">SKY5IP </span><span style="color:#d9d98a">CAMTMP </span><span style="color:#4cc24c">CAMERA TEMPERATURE.....</span></div>
<div class="a mono" style="left:695.5px;top:70.8px;width:80px;text-align:right;color:#e6e6e6">19.50</div>
<div class="a mono" style="left:778.5px;top:70.8px;color:#e6e6e6">&#176;C</div>
<div class="a mono" style="left:595.2px;top:83.3px"><span style="color:#a9a9a9">SKY5IP </span><span style="color:#d9d98a">CAMHGT </span><span style="color:#4cc24c">CAMERA IMAGE HEIGHT....</span></div>
<div class="a mono" style="left:695.5px;top:83.3px;width:80px;text-align:right;color:#e6e6e6">2560</div>
<div class="a mono" style="left:595.2px;top:95.7px"><span style="color:#a9a9a9">SKY5IP </span><span style="color:#d9d98a">CAMWDT </span><span style="color:#4cc24c">CAMERA IMAGE WIDTH.....</span></div>
<div class="a mono" style="left:695.5px;top:95.7px;width:80px;text-align:right;color:#e6e6e6">2560</div>
<div class="a" style="left:390px;top:137.3px;width:410px;height:1px;background:#8e8e8e;"></div>
<div class="a" style="left:390px;top:140.5px;width:410px;height:10.5px;background:#eeeeee;"></div>
<div class="a" style="left:390px;top:140.5px;width:123.5px;height:10.5px;background:#fff;"></div>
<div class="a ui" style="left:395px;top:140px;">SkyCam5 SensorFusionAndSelection</div>
<div class="a " style="left:504px;top:139.8px;font-size:7px;line-height:8px">&#215;</div>
<svg class="a" style="left:792px;top:141.8px" width="8" height="6"><path d="M0.3 0.5 L7.3 0.5 L3.8 4.3 Z" fill="#111"/></svg>
<div class="a" style="left:390px;top:151.3px;width:410px;height:1px;background:#d6d6d6;"></div>
<div class="a" style="left:394.5px;top:152.3px;width:198.79999999999995px;height:10.5px;background:#fff;border:1px solid #dadada;border-bottom:none"></div>
<div class="a" style="left:419.3px;top:153.8px;width:1px;height:7.5px;background:#ececec;"></div>
<div class="a" style="left:444.2px;top:153.8px;width:1px;height:7.5px;background:#ececec;"></div>
<div class="a" style="left:534.5px;top:153.8px;width:1px;height:7.5px;background:#ececec;"></div>
<div class="a" style="left:573.5px;top:153.8px;width:1px;height:7.5px;background:#ececec;"></div>
<div class="a" style="left:394.5px;top:152.3px;width:24.80000000000001px;text-align:center;font-size:5px;line-height:10.5px;color:#222">COMP</div>
<div class="a" style="left:419.3px;top:152.3px;width:24.899999999999977px;text-align:center;font-size:5px;line-height:10.5px;color:#222">TM ID</div>
<div class="a" style="left:444.2px;top:152.3px;width:90.30000000000001px;text-align:center;font-size:5px;line-height:10.5px;color:#222">Description</div>
<div class="a" style="left:534.5px;top:152.3px;width:39.0px;text-align:center;font-size:5px;line-height:10.5px;color:#222">Value</div>
<div class="a" style="left:573.5px;top:152.3px;width:19.799999999999955px;text-align:center;font-size:5px;line-height:10.5px;color:#222">Unit</div>
<div class="a" style="left:394.5px;top:162.8px;width:198.8px;height:94.5px;background:#000;"></div>
<div class="a" style="left:596.5px;top:152.3px;width:199.5px;height:10.5px;background:#fff;border:1px solid #dadada;border-bottom:none"></div>
<div class="a" style="left:621px;top:153.8px;width:1px;height:7.5px;background:#ececec;"></div>
<div class="a" style="left:646px;top:153.8px;width:1px;height:7.5px;background:#ececec;"></div>
<div class="a" style="left:736.4px;top:153.8px;width:1px;height:7.5px;background:#ececec;"></div>
<div class="a" style="left:777px;top:153.8px;width:1px;height:7.5px;background:#ececec;"></div>
<div class="a" style="left:596.5px;top:152.3px;width:24.5px;text-align:center;font-size:5px;line-height:10.5px;color:#222">COMP</div>
<div class="a" style="left:621px;top:152.3px;width:25px;text-align:center;font-size:5px;line-height:10.5px;color:#222">TM ID</div>
<div class="a" style="left:646px;top:152.3px;width:90.39999999999998px;text-align:center;font-size:5px;line-height:10.5px;color:#222">Description</div>
<div class="a" style="left:736.4px;top:152.3px;width:40.60000000000002px;text-align:center;font-size:5px;line-height:10.5px;color:#222">Value</div>
<div class="a" style="left:777px;top:152.3px;width:19px;text-align:center;font-size:5px;line-height:10.5px;color:#222">Unit</div>
<div class="a" style="left:596.5px;top:162.8px;width:199.5px;height:94.5px;background:#000;"></div>
<div class="a mono" style="left:396.8px;top:166.7px"><span style="color:#a9a9a9">SKY5FS </span><span style="color:#d9d98a">IMGWID </span><span style="color:#4cc24c">IMAGES WITH DETECTION..</span></div>
<div class="a mono" style="left:492.79999999999995px;top:166.7px;width:80px;text-align:right;color:#e6e6e6">2325</div>
<div class="a mono" style="left:396.8px;top:178.7px"><span style="color:#a9a9a9">SKY5FS </span><span style="color:#d9d98a">IMGWOD </span><span style="color:#4cc24c">IMAGES WITHOUT DETECTI&#8230;</span></div>
<div class="a mono" style="left:492.79999999999995px;top:178.7px;width:80px;text-align:right;color:#e6e6e6">3366990</div>
<div class="a mono" style="left:597.8px;top:166.7px"><span style="color:#a9a9a9">SKY5FS </span><span style="color:#d9d98a">SVDVOD </span><span style="color:#4cc24c">SAVED VIDEOS...........</span></div>
<div class="a mono" style="left:695.4px;top:166.7px;width:80px;text-align:right;color:#e6e6e6">39</div>
<div class="a mono" style="left:597.8px;top:178.7px"><span style="color:#a9a9a9">SKY5FS </span><span style="color:#d9d98a">SHREVT </span><span style="color:#4cc24c">SHORT EVENTS...........</span></div>
<div class="a mono" style="left:695.4px;top:178.7px;width:80px;text-align:right;color:#e6e6e6">5</div>
<div class="a mono" style="left:597.8px;top:191.2px"><span style="color:#a9a9a9">SKY5FS </span><span style="color:#d9d98a">LNGEVT </span><span style="color:#4cc24c">LONG EVENTS............</span></div>
<div class="a mono" style="left:695.4px;top:191.2px;width:80px;text-align:right;color:#e6e6e6">39</div>
<div class="a" style="left:390px;top:262.5px;width:410px;height:1px;background:#8e8e8e;"></div>
<div class="a" style="left:390px;top:266px;width:410px;height:7px;background:#eeeeee;"></div>
<div class="a" style="left:390px;top:266px;width:66px;height:7px;background:#fff;"></div>
<div class="a ui" style="left:395px;top:265px;">SkyCam5 Server</div>
<div class="a " style="left:446px;top:264.8px;font-size:7px;line-height:8px">&#215;</div>
<svg class="a" style="left:792px;top:266.8px" width="8" height="6"><path d="M0.3 0.5 L7.3 0.5 L3.8 4.3 Z" fill="#111"/></svg>
<div class="a" style="left:390px;top:276.3px;width:410px;height:1px;background:#d6d6d6;"></div>
<div class="a" style="left:394.5px;top:277.3px;width:198.79999999999995px;height:10.0px;background:#fff;border:1px solid #dadada;border-bottom:none"></div>
<div class="a" style="left:420.6px;top:278.8px;width:1px;height:7.0px;background:#ececec;"></div>
<div class="a" style="left:445.5px;top:278.8px;width:1px;height:7.0px;background:#ececec;"></div>
<div class="a" style="left:534.5px;top:278.8px;width:1px;height:7.0px;background:#ececec;"></div>
<div class="a" style="left:575px;top:278.8px;width:1px;height:7.0px;background:#ececec;"></div>
<div class="a" style="left:394.5px;top:277.3px;width:26.100000000000023px;text-align:center;font-size:5px;line-height:10.0px;color:#222">COMP</div>
<div class="a" style="left:420.6px;top:277.3px;width:24.899999999999977px;text-align:center;font-size:5px;line-height:10.0px;color:#222">TM ID</div>
<div class="a" style="left:445.5px;top:277.3px;width:89.0px;text-align:center;font-size:5px;line-height:10.0px;color:#222">Description</div>
<div class="a" style="left:534.5px;top:277.3px;width:40.5px;text-align:center;font-size:5px;line-height:10.0px;color:#222">Value</div>
<div class="a" style="left:575px;top:277.3px;width:18.299999999999955px;text-align:center;font-size:5px;line-height:10.0px;color:#222">Unit</div>
<div class="a" style="left:394.5px;top:287.3px;width:198.8px;height:132.7px;background:#000;"></div>
<div class="a" style="left:596.5px;top:277.3px;width:199.5px;height:10.0px;background:#fff;border:1px solid #dadada;border-bottom:none"></div>
<div class="a" style="left:622.7px;top:278.8px;width:1px;height:7.0px;background:#ececec;"></div>
<div class="a" style="left:645px;top:278.8px;width:1px;height:7.0px;background:#ececec;"></div>
<div class="a" style="left:736px;top:278.8px;width:1px;height:7.0px;background:#ececec;"></div>
<div class="a" style="left:776.8px;top:278.8px;width:1px;height:7.0px;background:#ececec;"></div>
<div class="a" style="left:596.5px;top:277.3px;width:26.200000000000045px;text-align:center;font-size:5px;line-height:10.0px;color:#222">COMP</div>
<div class="a" style="left:622.7px;top:277.3px;width:22.299999999999955px;text-align:center;font-size:5px;line-height:10.0px;color:#222">TM ID</div>
<div class="a" style="left:645px;top:277.3px;width:91px;text-align:center;font-size:5px;line-height:10.0px;color:#222">Description</div>
<div class="a" style="left:736px;top:277.3px;width:40.799999999999955px;text-align:center;font-size:5px;line-height:10.0px;color:#222">Value</div>
<div class="a" style="left:776.8px;top:277.3px;width:19.200000000000045px;text-align:center;font-size:5px;line-height:10.0px;color:#222">Unit</div>
<div class="a" style="left:596.5px;top:287.3px;width:199.5px;height:132.7px;background:#000;"></div>
<div class="a mono" style="left:396.7px;top:291.5px"><span style="color:#a9a9a9">SKY5SV </span><span style="color:#d9d98a">SRVUPT </span><span style="color:#4cc24c">SERVER UPTIME..........</span></div>
<div class="a mono" style="left:492.79999999999995px;top:291.5px;width:80px;text-align:right;color:#e6e6e6">1d02h57m&#8230;</div>
<div class="a mono" style="left:396.7px;top:303.9px"><span style="color:#a9a9a9">SKY5SV </span><span style="color:#d9d98a">CMDCNT </span><span style="color:#4cc24c">COMMAND COUNTER........</span></div>
<div class="a mono" style="left:492.79999999999995px;top:303.9px;width:80px;text-align:right;color:#e6e6e6">6</div>
<div class="a mono" style="left:396.7px;top:316.3px"><span style="color:#a9a9a9">SKY5SV </span><span style="color:#d9d98a">TMRATE </span><span style="color:#4cc24c">TELEMETRY RATE.........</span></div>
<div class="a mono" style="left:492.79999999999995px;top:316.3px;width:80px;text-align:right;color:#e6e6e6">30</div>
<div class="a mono" style="left:575.5px;top:316.3px;color:#e6e6e6">s</div>
<div class="a mono" style="left:396.7px;top:329.1px"><span style="color:#a9a9a9">SKY5SV </span><span style="color:#d9d98a">SVTIME </span><span style="color:#4cc24c">SERVER TIME............</span></div>
<div class="a mono" style="left:492.79999999999995px;top:329.1px;width:80px;text-align:right;color:#e6e6e6">11:32:46</div>
<div class="a mono" style="left:575.5px;top:329.1px;color:#e6e6e6">UTC</div>
<div class="a mono" style="left:597.8px;top:291.5px"><span style="color:#a9a9a9">SKY5SV </span><span style="color:#d9d98a">FRSTRG </span><span style="color:#4cc24c">FREE STORAGE SPACE.....</span></div>
<div class="a mono" style="left:695px;top:291.5px;width:80px;text-align:right;color:#e6e6e6">778.84</div>
<div class="a mono" style="left:778px;top:291.5px;color:#e6e6e6">GiB</div>
<div class="a mono" style="left:597.8px;top:303.9px"><span style="color:#a9a9a9">SKY5SV </span><span style="color:#d9d98a">RAMUSG </span><span style="color:#4cc24c">RAM USAGE..............</span></div>
<div class="a mono" style="left:695px;top:303.9px;width:80px;text-align:right;color:#e6e6e6">32.32</div>
<div class="a mono" style="left:778px;top:303.9px;color:#e6e6e6">%</div>
<div class="a mono" style="left:597.8px;top:316.3px"><span style="color:#a9a9a9">SKY5CS </span><span style="color:#d9d98a">DELRUN </span><span style="color:#4cc24c">COUNT OF DELETE RUNS...</span></div>
<div class="a mono" style="left:695px;top:316.3px;width:80px;text-align:right;color:#e6e6e6">1</div>
<div class="a mono" style="left:597.8px;top:329.1px"><span style="color:#a9a9a9">SKY5CS </span><span style="color:#d9d98a">DELDBR </span><span style="color:#4cc24c">DELETED DB ROWS........</span></div>
<div class="a mono" style="left:695px;top:329.1px;width:80px;text-align:right;color:#e6e6e6">0</div>
<div class="a mono" style="left:597.8px;top:341.6px"><span style="color:#a9a9a9">SKY5CS </span><span style="color:#d9d98a">DELFLC </span><span style="color:#4cc24c">DELETED FILE COUNT.....</span></div>
<div class="a mono" style="left:695px;top:341.6px;width:80px;text-align:right;color:#e6e6e6">0</div>
<div class="a" style="left:797.5px;top:31.5px;width:0.8px;height:106px;background:#d6d6d6;"></div>
<div class="a" style="left:797.5px;top:151.5px;width:0.8px;height:111px;background:#d6d6d6;"></div>
<div class="a" style="left:797.5px;top:276.5px;width:0.8px;height:148px;background:#d6d6d6;"></div>
<div class="a" style="left:0px;top:432.5px;width:800px;height:17.5px;background:#1d2634;"></div>
<div class="a" style="left:20px;top:432.5px;width:143px;height:17.5px;background:#f3f3f3;border:1px solid #b8bec6;border-bottom:none"></div>
<svg class="a" style="left:6.5px;top:437.8px" width="8" height="8"><path d="M0 1 L3.4 0.5 L3.4 3.4 L0 3.4 Z M4 0.4 L7.6 0 L7.6 3.4 L4 3.4 Z M0 4 L3.4 4 L3.4 6.9 L0 6.4 Z M4 4 L7.6 4 L7.6 7.4 L4 6.9 Z" fill="#f4f4f4"/></svg>
<svg class="a" style="left:25px;top:437px" width="9" height="9"><circle cx="5.3" cy="3.7" r="2.6" stroke="#222" stroke-width="1" fill="none"/><path d="M3.4 5.6 L0.8 8.2" stroke="#222" stroke-width="1.2"/></svg>
<div class="a " style="left:36.5px;top:437.3px;font-size:6.4px;line-height:9px;color:#111;-webkit-text-stroke:0.1px #111">Zur Suche Text hier eingeben</div>
<svg class="a" style="left:168px;top:436px" width="11" height="11" viewBox="0 0 11 11"><circle cx="5.2" cy="5.5" r="3.3" stroke="#e8e8e8" stroke-width="1.4" fill="none"/></svg>
<svg class="a" style="left:188px;top:437px" width="10" height="9" viewBox="0 0 10 9"><rect x="1.5" y="1" width="3" height="2.5" fill="#ddd"/><rect x="5.5" y="1" width="3" height="2.5" fill="#ddd"/><rect x="1.5" y="4.5" width="7" height="3" fill="#ddd"/><rect x="2.3" y="5.3" width="5.4" height="1.4" fill="#1d2634"/></svg>
<svg class="a" style="left:209px;top:437px" width="12" height="10" viewBox="0 0 12 10"><path d="M1 1.5 L4.5 1.5 L5.5 2.5 L10.5 2.5 L10.5 9 L1 9 Z" fill="#f4c430"/><rect x="1" y="3.5" width="9.5" height="5.5" fill="#ffd84a"/><rect x="3.5" y="6" width="4.5" height="3" fill="#2f7fd0"/></svg>
<svg class="a" style="left:230px;top:436px" width="11" height="11" viewBox="0 0 11 11"><circle cx="5.5" cy="5.5" r="4.6" fill="#ff7a1a"/><circle cx="5.5" cy="5.8" r="2.6" fill="#7a3fc9"/><path d="M2 2.5 Q4 0.5 7 1.5 Q9.5 3 9.8 5" stroke="#ffcf3a" stroke-width="1.2" fill="none"/></svg>
<svg class="a" style="left:250px;top:437px" width="11" height="10" viewBox="0 0 11 10"><rect x="0" y="0" width="10.5" height="9.5" fill="#e4432d"/><ellipse cx="5.3" cy="4.8" rx="3" ry="1.9" fill="#fff"/><circle cx="5.3" cy="4.8" r="1" fill="#e4432d"/></svg>
<svg class="a" style="left:271px;top:436px" width="11" height="11" viewBox="0 0 11 11"><circle cx="5.4" cy="5.6" r="4.8" fill="#e21f26"/><text x="5.4" y="7.6" font-family="Liberation Sans" font-size="5.2" font-weight="bold" fill="#fff" text-anchor="middle">DK</text></svg>
<svg class="a" style="left:290px;top:436px" width="12" height="12" viewBox="0 0 12 12"><circle cx="5.8" cy="5.8" r="5" fill="#f4f6fb"/><circle cx="5.8" cy="5.8" r="2.9" stroke="#3a6fc4" stroke-width="1.3" fill="none"/><circle cx="5.8" cy="2.3" r="1" fill="#3a6fc4"/><circle cx="9" cy="7.3" r="1" fill="#3a6fc4"/><circle cx="2.6" cy="7.3" r="1" fill="#3a6fc4"/></svg>
<svg class="a" style="left:311px;top:436px" width="11" height="10" viewBox="0 0 11 10"><rect x="1" y="1" width="9.5" height="8" fill="#111" stroke="#8b8b8b" stroke-width="1"/><path d="M2 4 L9.5 3" stroke="#bbb" stroke-width="0.8"/></svg>
<svg class="a" style="left:332px;top:436px" width="10" height="11" viewBox="0 0 10 11"><circle cx="5" cy="5.6" r="4.6" fill="#16a5a8"/><path d="M2.2 5.6 Q3.5 4 5 5.6 Q6.5 7.2 7.8 5.6 Q6.5 4 5 5.6 Q3.5 7.2 2.2 5.6" stroke="#fff" stroke-width="0.8" fill="none"/></svg>
<svg class="a" style="left:352px;top:436px" width="11" height="11" viewBox="0 0 11 11"><circle cx="5.5" cy="5.5" r="5" fill="#f2f4f2"/><path d="M2 3 Q4.5 0.5 8 1.8 L6 4.5 Z" fill="#3bb04a"/><path d="M9.5 3.5 Q10.5 7.5 7.5 9.6 L6.5 6 Z" fill="#2b7cd3"/></svg>
<svg class="a" style="left:373px;top:436px" width="11" height="10" viewBox="0 0 11 10"><rect x="0" y="0.8" width="10.2" height="9" fill="#1b3aa8"/><rect x="0.8" y="1.5" width="8.6" height="3" fill="#2d63cf"/></svg>
<div class="a" style="left:388px;top:433px;width:20px;height:17px;background:#3b4553;"></div>
<div class="a" style="left:388px;top:449px;width:20px;height:1px;background:#7fb2e6;"></div>
<svg class="a" style="left:393px;top:436.5px" width="11" height="10" viewBox="0 0 11 10"><rect x="0" y="0" width="10.5" height="10" fill="#f4f4f4"/><circle cx="4" cy="6.5" r="2.4" fill="#2f6fd0"/><path d="M5 5 L9 1.5 M6 6.5 L9.5 3.5" stroke="#333" stroke-width="0.8"/></svg>
<svg class="a" style="left:413.5px;top:436.5px" width="11" height="10" viewBox="0 0 11 10"><rect x="0" y="0" width="10.5" height="10" fill="#f4f4f4"/><circle cx="4" cy="6.5" r="2.4" fill="#2f6fd0"/><path d="M5 5 L9 1.5 M6 6.5 L9.5 3.5" stroke="#333" stroke-width="0.8"/></svg>
<svg class="a" style="left:434px;top:436.5px" width="11" height="10" viewBox="0 0 11 10"><rect x="0" y="0" width="10.5" height="10" fill="#f4f4f4"/><circle cx="4" cy="6.5" r="2.4" fill="#2f6fd0"/><path d="M5 5 L9 1.5 M6 6.5 L9.5 3.5" stroke="#333" stroke-width="0.8"/></svg>
<svg class="a" style="left:454.5px;top:436.5px" width="11" height="10" viewBox="0 0 11 10"><rect x="0" y="0" width="10.5" height="10" fill="#f4f4f4"/><circle cx="4" cy="6.5" r="2.4" fill="#2f6fd0"/><path d="M5 5 L9 1.5 M6 6.5 L9.5 3.5" stroke="#333" stroke-width="0.8"/></svg>
<svg class="a" style="left:475px;top:436px" width="11" height="11" viewBox="0 0 11 11"><circle cx="5.3" cy="5.3" r="5" fill="#1aa0e6"/><text x="5.3" y="7.6" font-family="Liberation Sans" font-size="6.5" font-weight="bold" fill="#fff" text-anchor="middle">S</text></svg>
<svg class="a" style="left:495px;top:436px" width="11" height="11" viewBox="0 0 11 11"><circle cx="5.4" cy="5.4" r="5" fill="#1f7fd6"/><path d="M1 6 Q2 1 6 0.8 Q10 1 10.3 5 Q9 3.5 6.5 4 Q4.5 5 5 7.5 Q5.8 9.6 9 9.2 Q6 11.5 3 9.8" fill="#46c86a"/><circle cx="6.3" cy="6.3" r="1.6" fill="#1d2634"/></svg>
<svg class="a" style="left:516px;top:436px" width="10" height="11" viewBox="0 0 10 11"><path d="M5 0.8 L9.3 9.6 L0.7 9.6 Z" fill="#ff8a00"/><path d="M2.6 5.5 L7.4 5.5 L8 7 L2 7 Z" fill="#fff"/><rect x="0.5" y="9.2" width="9" height="1.2" fill="#ff8a00"/></svg>
<svg class="a" style="left:536px;top:438px" width="10" height="8" viewBox="0 0 10 8"><rect x="0.3" y="0.3" width="9.5" height="7" fill="#f0f0f0"/><circle cx="5" cy="3.8" r="1.6" fill="#2a5fc8"/></svg>
<svg class="a" style="left:674px;top:437px" width="13" height="9" viewBox="0 0 13 9"><rect x="0.8" y="0.8" width="11.4" height="7.6" fill="#d9d9d9" stroke="#f4f4f4" stroke-width="0.8"/><rect x="2.5" y="3" width="7.5" height="3.3" fill="#999"/></svg>
<svg class="a" style="left:692px;top:438px" width="7" height="5" viewBox="0 0 7 5"><path d="M0.8 4.2 L3.5 1.2 L6.2 4.2" stroke="#e6e6e6" stroke-width="1" fill="none"/></svg>
<svg class="a" style="left:701px;top:436.5px" width="9" height="10" viewBox="0 0 9 10"><rect x="0.8" y="1" width="5" height="6.5" stroke="#ddd" stroke-width="0.9" fill="none"/><circle cx="6" cy="7" r="2.3" fill="#2b6fd6"/></svg>
<svg class="a" style="left:711px;top:437px" width="8" height="9" viewBox="0 0 8 9"><path d="M0.8 0.8 L7.2 0.8 L7.2 4.5 Q7 7.5 4 8.5 Q1 7.5 0.8 4.5 Z" fill="#e8eef6"/><path d="M2.3 3.5 L4 5 L5.8 3.5" stroke="#2a6fb8" stroke-width="0.9" fill="none"/></svg>
<svg class="a" style="left:721px;top:437.5px" width="9" height="8" viewBox="0 0 9 8"><path d="M1 4 Q4.5 0.5 8 4" stroke="#ddd" stroke-width="0.9" fill="none"/><path d="M2.5 5.5 Q4.5 3.5 6.5 5.5" stroke="#ddd" stroke-width="0.9" fill="none"/><circle cx="4.5" cy="7" r="0.8" fill="#ddd"/></svg>
<svg class="a" style="left:730px;top:437px" width="10" height="9" viewBox="0 0 10 9"><rect x="1" y="1" width="8" height="5.5" stroke="#e0e0e0" stroke-width="1" fill="none"/><path d="M3 8 L7 8" stroke="#e0e0e0" stroke-width="1"/></svg>
<svg class="a" style="left:740px;top:437px" width="9" height="9" viewBox="0 0 9 9"><path d="M0.8 3.3 L2.5 3.3 L4.8 1.2 L4.8 7.8 L2.5 5.7 L0.8 5.7 Z" fill="#e0e0e0"/><path d="M6 2.8 Q7.5 4.5 6 6.2" stroke="#e0e0e0" stroke-width="0.7" fill="none"/></svg>
<div class="a" style="left:745px;top:433px;width:39px;text-align:center;font-size:5.4px;line-height:8.2px;color:#f0f0f0;text-rendering:geometricPrecision">12:33<br>17.12.2021</div>
<svg class="a" style="left:782px;top:436.5px" width="12" height="12" viewBox="0 0 12 12"><path d="M1 1.2 L9.8 1.2 L9.8 7.6 L5 7.6 L3 9.6 L3 7.6 L1 7.6 Z" fill="#f0f0f0"/><path d="M2.8 3.3 L8 3.3 M2.8 5.3 L8 5.3" stroke="#444" stroke-width="0.7"/><circle cx="8.5" cy="8.8" r="2.5" fill="#1d2634" stroke="#f0f0f0" stroke-width="0.8"/></svg>
<div class="a" style="left:120.5px;top:19px;width:2px;height:406px;background:#fafafa;"></div>
<div class="a" style="left:124px;top:19px;width:2px;height:406px;background:#8f8f8f;"></div>
<div class="a" style="left:388.3px;top:19px;width:1.8px;height:406px;background:#8f8f8f;"></div>
<div class="a" style="left:0px;top:424px;width:800px;height:1px;background:#c8c8c8;"></div>
<div class="a" style="left:0px;top:425px;width:800px;height:7px;background:#f0f0f0;"></div>
</body></html>
